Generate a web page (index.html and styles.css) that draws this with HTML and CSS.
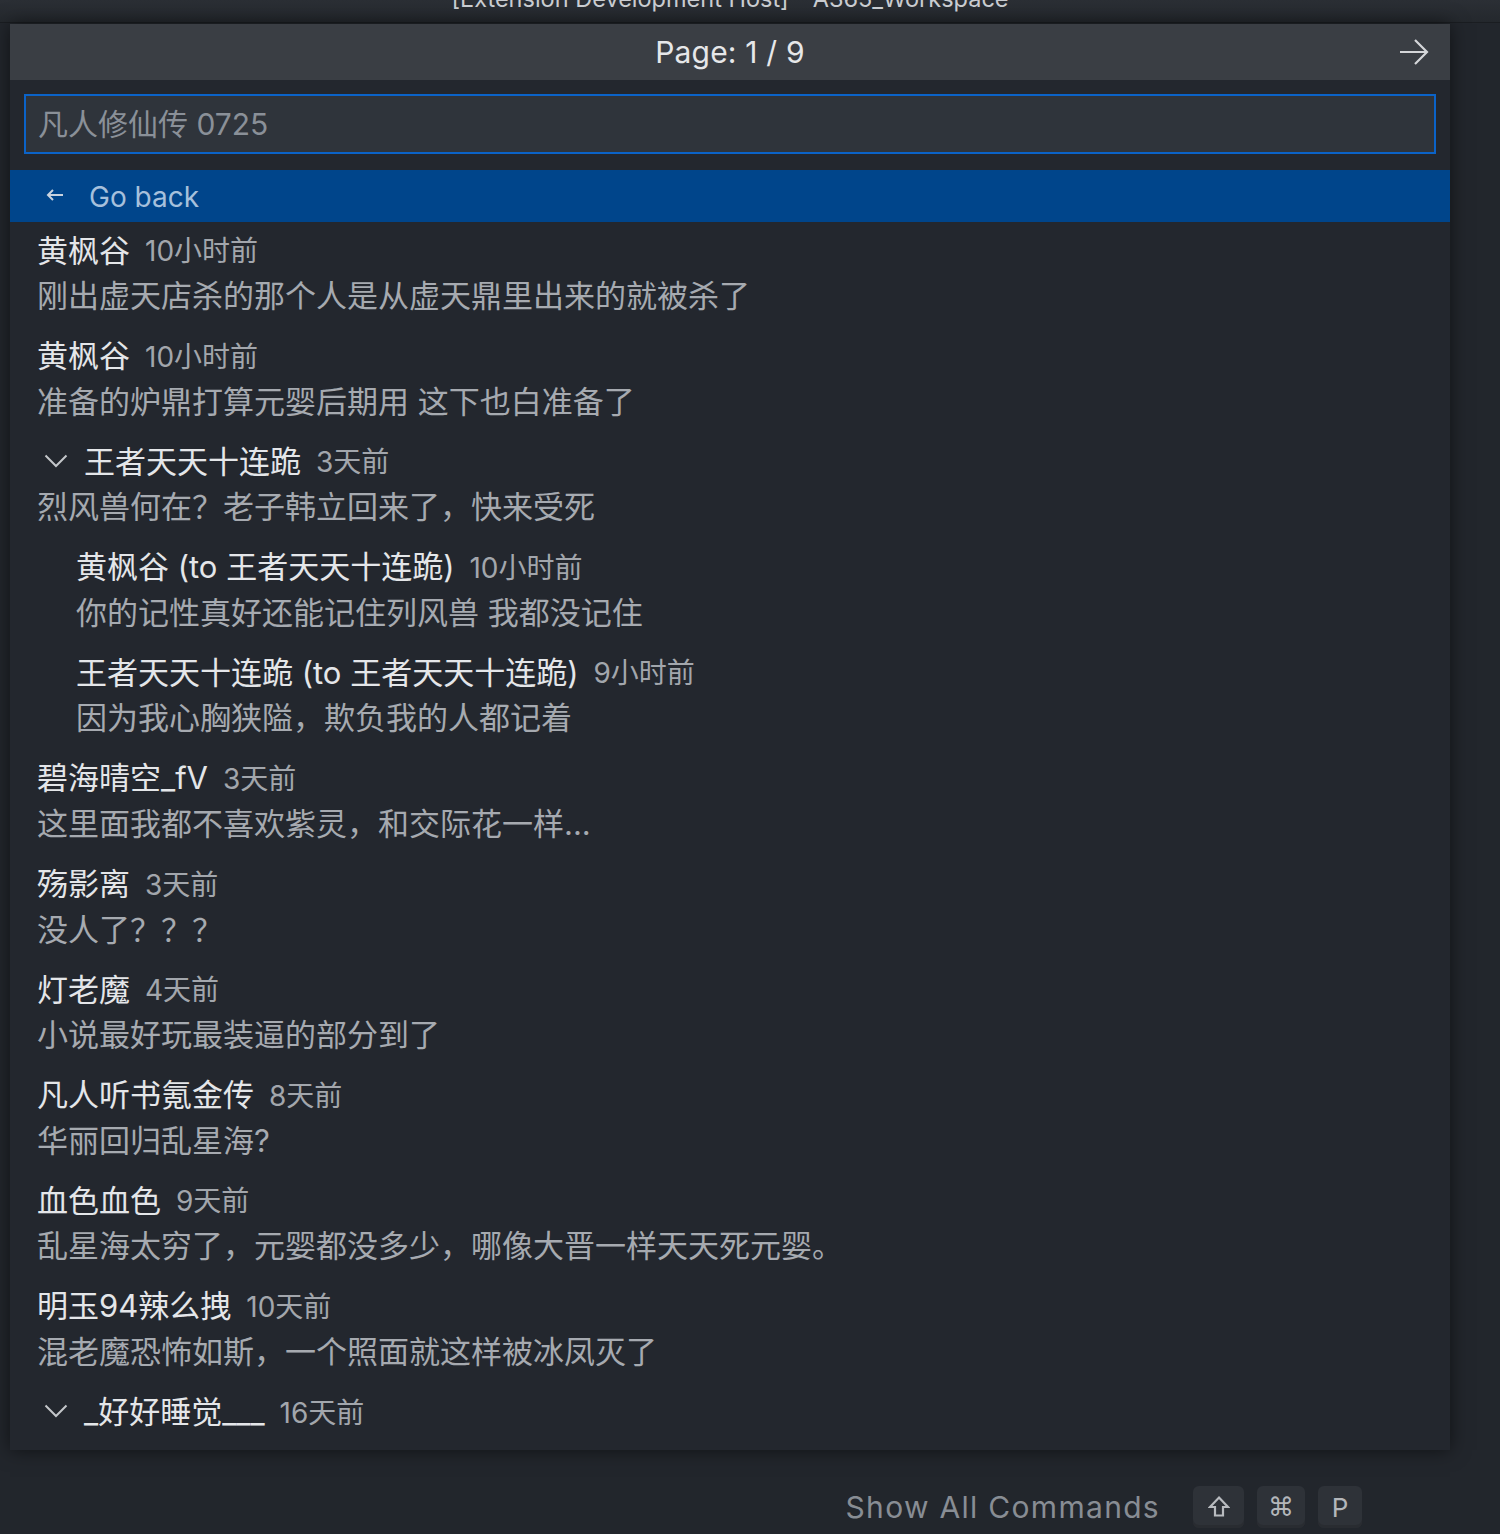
FILE: index.html
```html
<!DOCTYPE html>
<html lang="zh-CN">
<head>
<meta charset="utf-8">
<title>Quick Pick</title>
<link rel="stylesheet" href="styles.css">
</head>
<body>
<div class="titlebar"><div class="title">[Extension Development Host] - A365_Workspace</div></div>
<div class="workbench">
  <div class="quick-pick">
    <div class="qp-header">
      <div></div>
      <div class="qp-title">Page: 1 / 9</div>
      <div class="qp-actions">
        <svg class="icon-next" width="32" height="28" viewBox="0 0 32 28"><path d="M2 14H29M17 2L29 14L17 26" fill="none" stroke="#d4d6d9" stroke-width="2.2"/></svg>
      </div>
    </div>
    <div class="qp-input-wrap">
      <input class="qp-input" type="text" placeholder="凡人修仙传 0725">
    </div>
    <div class="qp-list">
      <div class="qp-back">
        <svg class="icon-back" width="20" height="16" viewBox="0 0 20 16"><path d="M18 8H3M8 3L3 8L8 13" fill="none" stroke="#c9d3df" stroke-width="2"/></svg>
        <span class="back-label">Go back</span>
      </div>

      <div class="item">
        <div class="label"><span class="name">黄枫谷</span><span class="desc">10小时前</span></div>
        <div class="detail">刚出虚天店杀的那个人是从虚天鼎里出来的就被杀了</div>
      </div>
      <div class="item">
        <div class="label"><span class="name">黄枫谷</span><span class="desc">10小时前</span></div>
        <div class="detail">准备的炉鼎打算元婴后期用 这下也白准备了</div>
      </div>
      <div class="item">
        <div class="label"><svg class="chev" width="24" height="14" viewBox="0 0 24 14"><path d="M1.5 1.5L12 12L22.5 1.5" fill="none" stroke="#c3c6ca" stroke-width="2"/></svg><span class="name">王者天天十连跪</span><span class="desc">3天前</span></div>
        <div class="detail">烈风兽何在？老子韩立回来了，快来受死</div>
      </div>
      <div class="item reply">
        <div class="label"><span class="name">黄枫谷 (to 王者天天十连跪)</span><span class="desc">10小时前</span></div>
        <div class="detail">你的记性真好还能记住列风兽 我都没记住</div>
      </div>
      <div class="item reply">
        <div class="label"><span class="name">王者天天十连跪 (to 王者天天十连跪)</span><span class="desc">9小时前</span></div>
        <div class="detail">因为我心胸狭隘，欺负我的人都记着</div>
      </div>
      <div class="item">
        <div class="label"><span class="name">碧海晴空_fV</span><span class="desc">3天前</span></div>
        <div class="detail">这里面我都不喜欢紫灵，和交际花一样...</div>
      </div>
      <div class="item">
        <div class="label"><span class="name">殇影离</span><span class="desc">3天前</span></div>
        <div class="detail">没人了？？？</div>
      </div>
      <div class="item">
        <div class="label"><span class="name">灯老魔</span><span class="desc">4天前</span></div>
        <div class="detail">小说最好玩最装逼的部分到了</div>
      </div>
      <div class="item">
        <div class="label"><span class="name">凡人听书氪金传</span><span class="desc">8天前</span></div>
        <div class="detail">华丽回归乱星海?</div>
      </div>
      <div class="item">
        <div class="label"><span class="name">血色血色</span><span class="desc">9天前</span></div>
        <div class="detail">乱星海太穷了，元婴都没多少，哪像大晋一样天天死元婴。</div>
      </div>
      <div class="item">
        <div class="label"><span class="name">明玉94辣么拽</span><span class="desc">10天前</span></div>
        <div class="detail">混老魔恐怖如斯，一个照面就这样被冰凤灭了</div>
      </div>
      <div class="item last">
        <div class="label"><svg class="chev" width="24" height="14" viewBox="0 0 24 14"><path d="M1.5 1.5L12 12L22.5 1.5" fill="none" stroke="#c3c6ca" stroke-width="2"/></svg><span class="name">_好好睡觉___</span><span class="desc">16天前</span></div>
      </div>
    </div>
  </div>
  <div class="footer">
    <span class="cmd-label">Show All Commands</span>
    <span class="key key-shift"><svg width="22" height="24" viewBox="0 0 22 24"><path d="M11 2.5L20 12H15V20.5H7V12H2Z" fill="none" stroke="#b8bbbf" stroke-width="2.2" stroke-linejoin="miter"/></svg></span>
    <span class="key key-cmd">⌘</span>
    <span class="key key-p">P</span>
  </div>
</div>
</body>
</html>
```

FILE: styles.css
```css
html, body {
  margin: 0;
  padding: 0;
}
body {
  width: 1500px;
  height: 1534px;
  overflow: hidden;
  background: #22262c;
  font-family: Inter, "Noto Sans CJK SC", sans-serif;
  color: #e3e5e8;
}
.titlebar {
  height: 22px;
  overflow: hidden;
  background: linear-gradient(#2b2f35, #24282d);
  border-bottom: 1px solid #1a1d21;
  display: flex;
  justify-content: center;
}
.title {
  font-size: 23.5px;
  line-height: 22px;
  margin-top: -12px;
  color: #c9ccd0;
  padding-right: 40px;
}
.workbench {
  padding-left: 10px;
  padding-top: 1px;
}
.quick-pick {
  width: 1440px;
  height: 1426px;
  background: #23272e;
  box-shadow: 0 0 18px rgba(0, 0, 0, 0.55);
  overflow: hidden;
}
.qp-header {
  height: 56px;
  background: #3a3e44;
  display: grid;
  grid-template-columns: 1fr auto 1fr;
  align-items: center;
}
.qp-title {
  font-size: 30px;
  color: #e6e7e9;
  letter-spacing: 0.2px;
}
.qp-actions {
  justify-self: end;
  padding-right: 20px;
  display: flex;
}
.qp-input-wrap {
  padding: 14px 14px 16px;
}
.qp-input {
  display: block;
  box-sizing: border-box;
  width: 1412px;
  height: 60px;
  margin: 0;
  border: 2px solid #0b63c8;
  background: #2f343b;
  padding: 0 12px;
  font-family: Inter, "Noto Sans CJK SC", sans-serif;
  font-size: 30px;
  color: #e3e5e8;
  outline: none;
}
.qp-input::placeholder {
  color: #8a9098;
}
.qp-back {
  height: 52px;
  background: #00458b;
  display: flex;
  align-items: center;
  padding-left: 35px;
}
.icon-back {
  margin-right: 24px;
  margin-top: -2px;
}
.back-label {
  font-size: 28px;
  color: #a6c0dc;
  margin-top: 2px;
}
.item {
  box-sizing: border-box;
  height: 105.6px;
  padding: 6px 0 0 27px;
}
.item.reply {
  padding-left: 66px;
}
.label {
  box-sizing: border-box;
  height: 45px;
  padding-bottom: 5px;
  display: flex;
  align-items: center;
  white-space: nowrap;
}
.name {
  font-size: 31px;
  color: #e4e6e9;
}
.desc {
  font-size: 28px;
  color: #a2a6ac;
  margin-left: 15px;
  margin-top: 2px;
}
.chev {
  margin-left: 7px;
  margin-right: 16px;
  margin-top: 3px;
}
.detail {
  height: 45px;
  line-height: 45px;
  font-size: 31px;
  color: #a6aab0;
  white-space: nowrap;
}
.footer {
  display: flex;
  justify-content: flex-end;
  align-items: center;
  padding-right: 138px;
  margin-top: 36px;
  gap: 13px;
}
.cmd-label {
  font-size: 30px;
  letter-spacing: 1.3px;
  color: #888d94;
  margin-right: 20px;
}
.key {
  box-sizing: border-box;
  height: 42px;
  display: flex;
  align-items: center;
  justify-content: center;
  background: #2e3238;
  border-radius: 6px;
  box-shadow: inset 0 -3px 0 #292c31;
  color: #b3b6ba;
  font-size: 26px;
  font-family: "DejaVu Sans", Inter, sans-serif;
}
.key-shift { width: 51px; }
.key-cmd { width: 48px; }
.key-p { width: 44px; font-family: Inter, sans-serif; }
```
